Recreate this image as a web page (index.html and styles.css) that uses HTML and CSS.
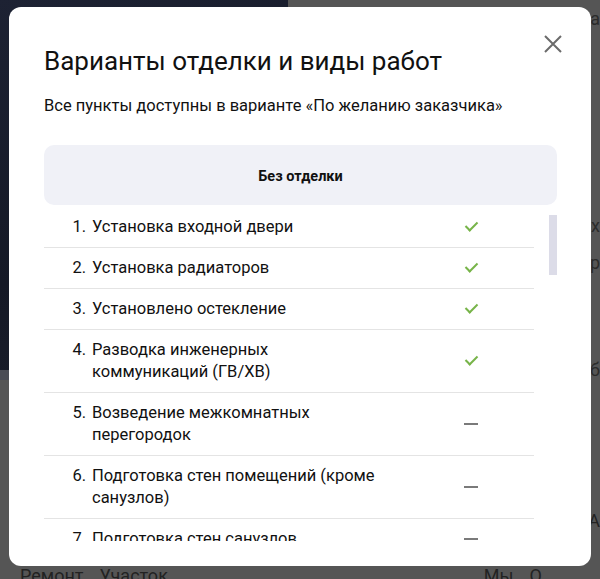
FILE: index.html
```html
<!DOCTYPE html>
<html lang="ru">
<head>
  <meta charset="UTF-8">
  <meta name="viewport" content="width=device-width, initial-scale=1.0">
  <title>Варианты отделки</title>
  <link rel="stylesheet" href="styles.css">
</head>
<body>

  <!-- страница под затемнением -->
  <div class="page">
    <div class="page-top">
      <div class="hero"></div>
      <div class="page-side">
        <span>а</span>
        <span class="s-1">іх</span>
        <span class="s-2">р</span>
        <span class="s-3">б</span>
      </div>
    </div>
    <div class="page-bottom">
      <span class="side-letter">А</span>
      <div class="page-menu">
        <span>Ремонт</span>
        <span>Участок</span>
        <span>Мы</span>
        <span>О</span>
      </div>
    </div>
  </div>

  <!-- модальное окно -->
  <div class="modal">
    <div class="modal-head">
      <h2 class="modal-title">Варианты отделки и виды работ</h2>
      <button class="modal-close" aria-label="Закрыть">
        <svg width="18" height="18" viewBox="0 0 18 18">
          <path d="M1 1 L17 17 M17 1 L1 17" stroke="#6b6b6b" stroke-width="2" fill="none"/>
        </svg>
      </button>
    </div>
    <p class="modal-sub">Все пункты доступны в варианте «По желанию заказчика»</p>

    <div class="tab-head">Без отделки</div>

    <div class="works">
      <ol class="works-list">
        <li class="work"><span class="num">1.</span><span class="name">Установка входной двери</span><span class="mark yes"></span></li>
        <li class="work"><span class="num">2.</span><span class="name">Установка радиаторов</span><span class="mark yes"></span></li>
        <li class="work"><span class="num">3.</span><span class="name">Установлено остекление</span><span class="mark yes"></span></li>
        <li class="work"><span class="num">4.</span><span class="name">Разводка инженерных коммуникаций (ГВ/ХВ)</span><span class="mark yes"></span></li>
        <li class="work"><span class="num">5.</span><span class="name">Возведение межкомнатных перегородок</span><span class="mark no"></span></li>
        <li class="work"><span class="num">6.</span><span class="name">Подготовка стен помещений (кроме санузлов)</span><span class="mark no"></span></li>
        <li class="work"><span class="num">7.</span><span class="name">Подготовка стен санузлов</span><span class="mark no"></span></li>
        <li class="work"><span class="num">8.</span><span class="name">Стяжка пола</span><span class="mark no"></span></li>
      </ol>
      <div class="scroll-track"><div class="scroll-thumb"></div></div>
    </div>
  </div>

</body>
</html>
```

FILE: styles.css
```css
* { margin: 0; padding: 0; box-sizing: border-box; }

html, body {
  height: 100%;
  overflow: hidden;
}

body {
  font-family: Roboto, "Noto Sans", sans-serif;
  background: #555555;
  color: #111;
}

/* фон страницы */
.page {
  height: 100%;
  display: flex;
  flex-direction: column;
}

.page-top {
  display: flex;
  height: 380px;
}

.hero {
  width: 288px;
  background: linear-gradient(160deg, #1d2233 0%, #151926 60%, #1b1f2c 100%);
  border-bottom: 10px solid #4a4c55;
}

.page-side {
  flex: 1;
  display: flex;
  flex-direction: column;
  align-items: flex-end;
  padding-top: 8px;
  color: #2b2b2b;
  font-size: 18px;
}

.page-side .s-1 { margin-top: 186px; }
.page-side .s-2 { margin-top: 16px; }
.page-side .s-3 { margin-top: 86px; }

.page-bottom {
  flex: 1;
  display: flex;
  flex-direction: column;
  color: #222;
  font-size: 18px;
}

.side-letter {
  align-self: flex-end;
  margin-top: 130px;
}

.page-menu {
  display: flex;
  gap: 16px;
  margin-top: 34px;
  padding-left: 20px;
}

.page-menu span:nth-child(3) { margin-left: 300px; }

/* модальное окно */
.modal {
  position: fixed;
  left: 9px;
  top: 7px;
  width: 582px;
  height: 559px;
  background: #fff;
  border-radius: 12px;
  padding: 26px 34px 25px 35px;
  display: flex;
  flex-direction: column;
}

.modal-head {
  display: flex;
  justify-content: space-between;
  align-items: flex-start;
}

.modal-title {
  font-size: 26px;
  font-weight: 400;
  line-height: 32px;
  margin-top: 12px;
}

.modal-close {
  border: none;
  background: none;
  width: 18px;
  height: 18px;
  margin: 2px -5px 0 0;
  cursor: pointer;
}

.modal-sub {
  font-size: 16.5px;
  line-height: 22px;
  margin-top: 18px;
}

.tab-head {
  margin-top: 28px;
  height: 60px;
  border-radius: 10px;
  background: #f0f1f7;
  display: flex;
  align-items: center;
  justify-content: center;
  font-size: 14.5px;
  font-weight: 700;
  padding-top: 3px;
}

/* список работ с полосой прокрутки */
.works {
  margin-top: 2px;
  flex: 1;
  min-height: 0;
  overflow: hidden;
  display: flex;
  gap: 15px;
}

.works-list {
  list-style: none;
  width: 490px;
  flex-shrink: 0;
}

.work {
  display: flex;
  align-items: center;
  padding: 9px 0;
  border-bottom: 1px solid #e4e4e4;
  font-size: 16.5px;
  line-height: 22px;
}

.num {
  width: 48px;
  text-align: right;
  padding-right: 6px;
  flex-shrink: 0;
  align-self: flex-start;
}

.name {
  width: 292px;
}

.mark {
  margin-left: auto;
  margin-right: 55px;
  width: 16px;
  height: 12px;
  position: relative;
}

.mark.yes::after {
  content: "";
  position: absolute;
  left: 2px;
  top: -2px;
  width: 5px;
  height: 10px;
  border: solid #77b449;
  border-width: 0 2px 2px 0;
  transform: translate(3px, 0) rotate(45deg);
}

.mark.no::after {
  content: "";
  position: absolute;
  left: 1px;
  top: 5px;
  width: 14px;
  height: 2px;
  background: #7a7a7a;
}

.scroll-track {
  width: 8px;
  flex-shrink: 0;
  padding-top: 8px;
}

.scroll-thumb {
  height: 60px;
  background: #dcdce8;
}
```
